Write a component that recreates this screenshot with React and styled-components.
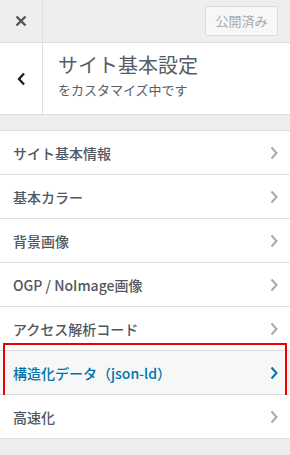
import React from "react";
import styled, { createGlobalStyle } from "styled-components";

const Global = createGlobalStyle`
  html, body { margin: 0; padding: 0; }
  body {
    background: #eeeeee;
    font-family: "Noto Sans CJK JP", "Noto Sans", "Liberation Sans", sans-serif;
    color: #555d66;
  }
`;

const Panel = styled.div`
  width: 290px;
  height: 455px;
  background: #eeeeee;
  overflow: hidden;
`;

const TopBar = styled.div`
  display: flex;
  align-items: center;
  height: 42px;
  border-bottom: 1px solid #dddddd;
  background: #eeeeee;
`;

const IconCell = styled.div`
  width: 42px;
  height: 100%;
  flex: none;
  display: flex;
  align-items: center;
  justify-content: center;
  border-right: 1px solid #dddddd;
  box-sizing: border-box;
  width: 43px;
`;

const Spacer = styled.div`
  flex: 1;
`;

const PublishButton = styled.button`
  margin-right: 12px;
  height: 30px;
  width: 73px;
  padding: 0;
  border: 1px solid #dcdcde;
  border-radius: 3px;
  background: #f6f7f7;
  color: #a7aaad;
  font-family: inherit;
  font-size: 13px;
  line-height: 28px;
`;

const Header = styled.div`
  display: flex;
  height: 71px;
  background: #ffffff;
  border-bottom: 1px solid #dddddd;
`;

const HeaderText = styled.div`
  padding: 8px 0 0 15px;
  display: flex;
  flex-direction: column;
`;

const Title = styled.div`
  font-size: 20px;
  line-height: 28px;
  font-weight: 400;
  color: #555d66;
`;

const Sub = styled.div`
  font-size: 13px;
  line-height: 20px;
  color: #555d66;
  margin-top: 1px;
`;

const Gap = styled.div`
  height: 15px;
`;

const List = styled.ul`
  list-style: none;
  margin: 0;
  padding: 0;
  border-top: 1px solid #dddddd;
`;

const ItemWrap = styled.li`
  position: relative;
`;

const Item = styled.div`
  display: flex;
  align-items: center;
  justify-content: space-between;
  height: 43px;
  padding: 0 12px 0 13px;
  border-bottom: 1px solid #dddddd;
  background: ${(p) => (p.$active ? "#f6f7f7" : "#ffffff")};
  color: ${(p) => (p.$active ? "#0073aa" : "#50575e")};
  font-size: 14px;
  font-weight: 500;
`;

const Highlight = styled.div`
  position: absolute;
  left: 3px;
  right: 3px;
  top: -8px;
  bottom: -9px;
  border: 2px solid #ee0000;
  pointer-events: none;
`;

const Chevron = ({ color }) => (
  <svg width="8" height="14" viewBox="0 0 8 14">
    <path d="M1.5 1.5 L6.5 7 L1.5 12.5" fill="none" stroke={color} strokeWidth="2" />
  </svg>
);

const items = [
  "サイト基本情報",
  "基本カラー",
  "背景画像",
  "OGP / NoImage画像",
  "アクセス解析コード",
  "構造化データ（json-ld）",
  "高速化",
];

export default function App() {
  return (
    <>
      <Global />
      <Panel>
        <TopBar>
          <IconCell>
            <svg width="12" height="12" viewBox="0 0 12 12">
              <path d="M1.5 1.5 L10.5 10.5 M10.5 1.5 L1.5 10.5" stroke="#50575e" strokeWidth="2.4" />
            </svg>
          </IconCell>
          <Spacer />
          <PublishButton>公開済み</PublishButton>
        </TopBar>
        <Header>
          <IconCell>
            <svg width="9" height="14" viewBox="0 0 9 14">
              <path d="M7 1.5 L2 7 L7 12.5" fill="none" stroke="#1d2327" strokeWidth="2.4" />
            </svg>
          </IconCell>
          <HeaderText>
            <Title>サイト基本設定</Title>
            <Sub>をカスタマイズ中です</Sub>
          </HeaderText>
        </Header>
        <Gap />
        <List>
          {items.map((t, i) => {
            const active = i === 5;
            return (
              <ItemWrap key={t}>
                <Item $active={active}>
                  <span>{t}</span>
                  <Chevron color={active ? "#0073aa" : "#a7aaad"} />
                </Item>
                {active && <Highlight />}
              </ItemWrap>
            );
          })}
        </List>
      </Panel>
    </>
  );
}
